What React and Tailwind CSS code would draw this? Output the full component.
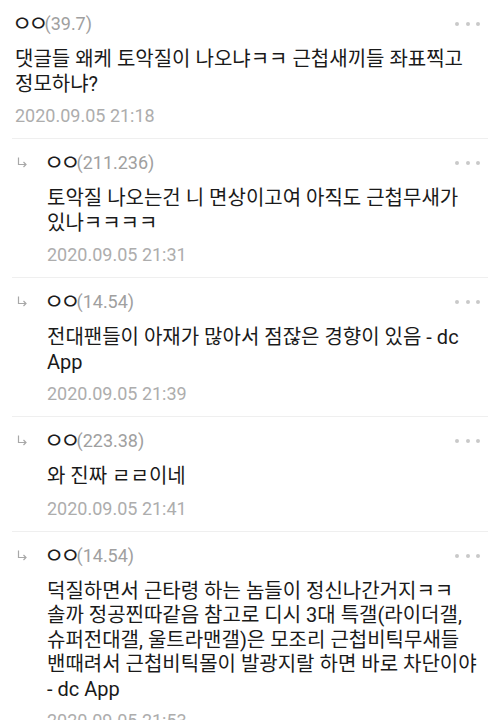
const comments = [
  {
    reply: false,
    ip: '(39.7)',
    body: '댓글들 왜케 토악질이 나오냐ㅋㅋ 근첩새끼들 좌표찍고 정모하냐?',
    date: '2020.09.05 21:18',
  },
  {
    reply: true,
    ip: '(211.236)',
    body: '토악질 나오는건 니 면상이고여 아직도 근첩무새가 있나ㅋㅋㅋㅋ',
    date: '2020.09.05 21:31',
  },
  {
    reply: true,
    ip: '(14.54)',
    body: '전대팬들이 아재가 많아서 점잖은 경향이 있음 - dc App',
    date: '2020.09.05 21:39',
  },
  {
    reply: true,
    ip: '(223.38)',
    body: '와 진짜 ㄹㄹ이네',
    date: '2020.09.05 21:41',
  },
  {
    reply: true,
    ip: '(14.54)',
    body: '덕질하면서 근타령 하는 놈들이 정신나간거지ㅋㅋ 솔까 정공찐따같음 참고로 디시 3대 특갤(라이더갤, 슈퍼전대갤, 울트라맨갤)은 모조리 근첩비틱무새들 밴때려서 근첩비틱몰이 발광지랄 하면 바로 차단이야 - dc App',
    date: '2020.09.05 21:53',
  },
];

function ReplyArrow() {
  return (
    <svg width="10" height="11" viewBox="0 0 10 11" fill="none" stroke="#a8a8a8" strokeWidth="1.2">
      <path d="M1.5 0.5V7.5H9" />
      <path d="M6.5 5L9 7.5L6.5 10" />
    </svg>
  );
}

function MoreDots() {
  return (
    <div className="flex items-center gap-[6.5px] mr-[8px]">
      <span className="w-[4px] h-[4px] rounded-full bg-[#c9c9c9]" />
      <span className="w-[4px] h-[4px] rounded-full bg-[#c9c9c9]" />
      <span className="w-[4px] h-[4px] rounded-full bg-[#c9c9c9]" />
    </div>
  );
}

function Comment({ c }) {
  return (
    <div className="flex border-b border-[#efefef] pt-[12px] pb-[10px]">
      {c.reply ? (
        <div className="w-[35px] shrink-0 pl-[5px] pt-[6px]">
          <ReplyArrow />
        </div>
      ) : (
        <div className="w-[3px] shrink-0" />
      )}
      <div className="flex-1 min-w-0">
        <div className="flex items-center justify-between h-[24px] leading-[24px]">
          <div className="flex items-center">
            <span className="-ml-[3px] text-[22px] tracking-[-4px] text-[#1c1c1c]">ㅇㅇ</span>
            <span className="text-[18px] text-[#a0a0a0]">{c.ip}</span>
          </div>
          <MoreDots />
        </div>
        <p className="mt-[11px] pr-[6px] text-[20px] leading-[24.5px] text-[#1a1a1a] break-keep">
          {c.body}
        </p>
        <div className="mt-[8px] text-[18px] leading-[24px] text-[#adadad]">{c.date}</div>
      </div>
    </div>
  );
}

export default function App() {
  return (
    <div className="w-[500px] min-h-[720px] bg-white px-[12px] font-[Roboto,'Noto_Sans_CJK_KR',sans-serif]">
      {comments.map((c, i) => (
        <Comment key={i} c={c} />
      ))}
    </div>
  );
}
